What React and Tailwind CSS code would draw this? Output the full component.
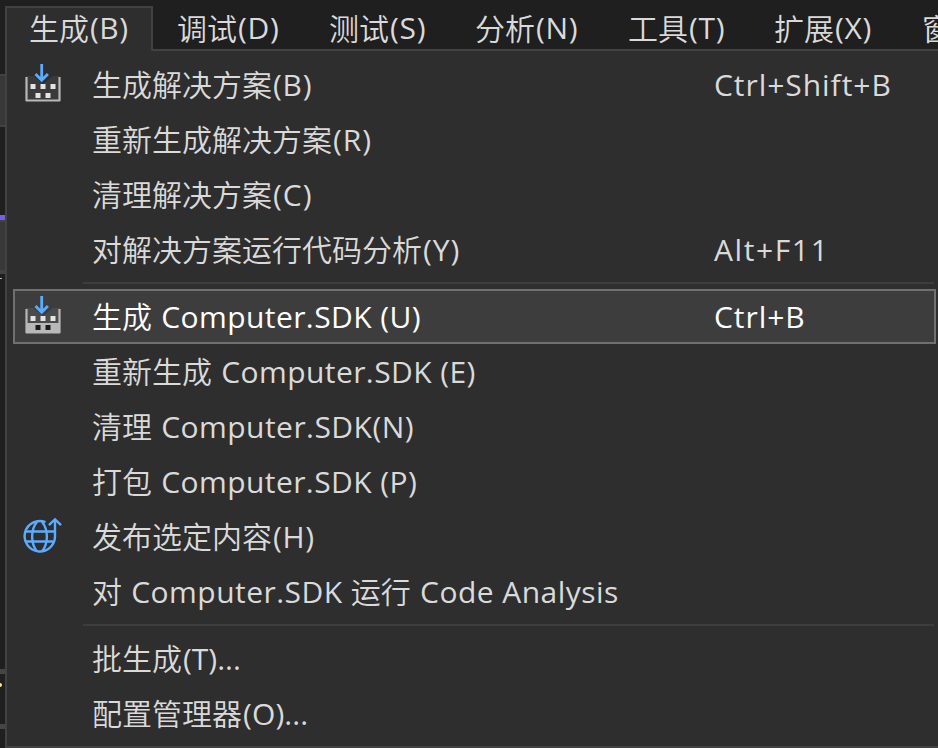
const latin = "font-['Open_Sans','Noto_Sans_CJK_SC',sans-serif] font-[370]";

// Splits a label so that Chinese and Latin runs can use their own font and tracking.
function Label({ text, spacing = 0.7 }) {
  const runs = text.match(/[\u4e00-\u9fff]+|[^\u4e00-\u9fff]+/g);
  return (
    <span className="flex whitespace-pre">
      {runs.map((run, i) =>
        /[\u4e00-\u9fff]/.test(run) ? (
          <span key={i} className="-mt-px mr-px font-['Noto_Sans_CJK_SC',sans-serif] font-[350]">{run}</span>
        ) : (
          <span key={i} className={latin} style={{ letterSpacing: spacing }}>{run}</span>
        )
      )}
    </span>
  );
}

function BuildIcon({ solid }) {
  return (
    <svg className="-mt-px block h-[40px] w-[40px]" viewBox="0 0 40 40" fill="none">
      <path d="M3 12v24h34V12H30L20 20 10 12z" fill={solid ? "#4b4b4b" : "#3a3a3a"} />
      {solid && <path d="M3 27h34v10H3z" fill="#b8b8b8" />}
      <path d="M3.5 13v23.5h33V13" stroke="#b8b8b8" strokeWidth="2.2" strokeLinejoin="round" />
      <path d="M7.500 20h5v5h-5zM17.500 20h5v5h-5zM27.500 20h5v5h-5z" fill="#e4e4e4" />
      <path d="M12.500 29h5v5h-5zM22.500 29h5v5h-5z" fill={solid ? "#1b1b1b" : "#e4e4e4"} />
      <path d="M18.700 0v16M12.500 10l6.200 6.200 6.200-6.200" stroke="#5bacff" strokeWidth="2.8" />
    </svg>
  );
}

function PublishIcon() {
  return (
    <svg className="-mt-px block h-[40px] w-[40px]" viewBox="0 0 40 40" fill="none" stroke="#5bacff" strokeWidth="2.4">
      <path d="M22.5 6.200A15.200 15.200 0 1 0 32 20.500V4" />
      <path d="M2.800 15.500H32M2.800 25.500h28M14 5.800c-6.500 8-6.500 22 0 29.500M19 5.800c6.500 8 6.500 22 0 29.500" />
      <path d="M25.900 9.200L32 3.400l6.100 5.800" />
    </svg>
  );
}

function Item({ text, shortcut, icon, active, spacing, keySpacing }) {
  return (
    <div
      className={`flex h-[55px] items-center text-[30px] leading-[55px] ${
        active
          ? "ml-[6px] mr-[2px] border-[2px] border-[#707070] bg-[#3d3d3d] pl-[8px] text-white"
          : "pl-[16px] text-[#dadada]"
      }`}
    >
      <span className="w-[69px] shrink-0">{icon}</span>
      <span className="w-[622px] shrink-0"><Label text={text} spacing={spacing} /></span>
      {shortcut && <Label text={shortcut} spacing={keySpacing} />}
    </div>
  );
}

function Separator() {
  return <div className="ml-[76px] mr-[4px] h-[2px] bg-[#3d3d3d]" />;
}

const menus = [
  ["调试(D)", "w-[152px]"],
  ["测试(S)", "w-[146px]"],
  ["分析(N)", "w-[153px]"],
  ["工具(T)", "w-[146px]"],
  ["扩展(X)", "w-[148px]"],
  ["窗口(W)", "w-[150px]"],
];

function EditorEdge() {
  return (
    <div className="flex h-[748px] w-[5px] shrink-0 flex-col overflow-hidden bg-[#1f1f1f]">
      <div className="h-[74px] shrink-0" />
      <div className="h-[53px] shrink-0 border-y-[2px] border-[#424242] bg-[#383838]" />
      <div className="h-[88px] shrink-0" />
      <div className="h-[5px] shrink-0 bg-[#7160e8]" />
      <div className="h-[54px] shrink-0 border-t-[2px] border-b-[4px] border-[#424242] bg-[#383838]" />
      <div className="mt-[4px] h-px w-[2px] shrink-0 bg-[#b8b8a8]" />
      <div className="mt-[390px] h-[5px] shrink-0 bg-[#464646]" />
      <div className="mt-[9px] h-[4px] w-[2px] shrink-0 rounded-r bg-[#ffe78f]" />
      <div className="mt-[37px] h-[5px] shrink-0 bg-[#464646]" />
    </div>
  );
}

export default function App() {
  return (
    <div className="flex h-[748px] w-[938px] overflow-hidden bg-[#1f1f1f]">
      <EditorEdge />
      <div className="flex w-[933px] shrink-0 flex-col">
        <div className="flex h-[51px] shrink-0 overflow-hidden pt-[6px] text-[30px] leading-[40px] text-[#dadada]">
          <div className="h-[45px] w-[148px] shrink-0 border-x-[2px] border-t-[2px] border-[#424242] bg-[#2e2e2e] pl-[22px]">
            <Label text="生成(B)" spacing={0.5} />
          </div>
          <div className="flex h-[45px] shrink-0 border-b-[2px] border-[#424242] pl-[24px] pt-[2px]">
            {menus.map(([text, width]) => (
              <div key={text} className={`${width} shrink-0`}><Label text={text} /></div>
            ))}
          </div>
        </div>
        <div className="flex h-[697px] flex-col border-b-[2px] border-l-[2px] border-[#424242] bg-[#2e2e2e] pt-[6px]">
          <Item text="生成解决方案(B)" shortcut="Ctrl+Shift+B" icon={<BuildIcon />} keySpacing={0.95} />
          <Item text="重新生成解决方案(R)" spacing={1} />
          <Item text="清理解决方案(C)" spacing={1} />
          <Item text="对解决方案运行代码分析(Y)" shortcut="Alt+F11" keySpacing={1.6} spacing={1} />
          <div className="pb-[5px] pt-[5px]"><Separator /></div>
          <Item text="生成 Computer.SDK (U)" shortcut="Ctrl+B" icon={<BuildIcon solid />} active keySpacing={0.95} spacing={0.42} />
          <Item text="重新生成 Computer.SDK (E)" spacing={0.42} />
          <Item text="清理 Computer.SDK(N)" spacing={0.45} />
          <Item text="打包 Computer.SDK (P)" spacing={0.42} />
          <Item text="发布选定内容(H)" icon={<PublishIcon />} />
          <Item text="对 Computer.SDK 运行 Code Analysis" spacing={0.46} />
          <div className="pb-[5px] pt-[5px]"><Separator /></div>
          <Item text="批生成(T)..." spacing={0} />
          <Item text="配置管理器(O)..." spacing={0.1} />
        </div>
      </div>
    </div>
  );
}
